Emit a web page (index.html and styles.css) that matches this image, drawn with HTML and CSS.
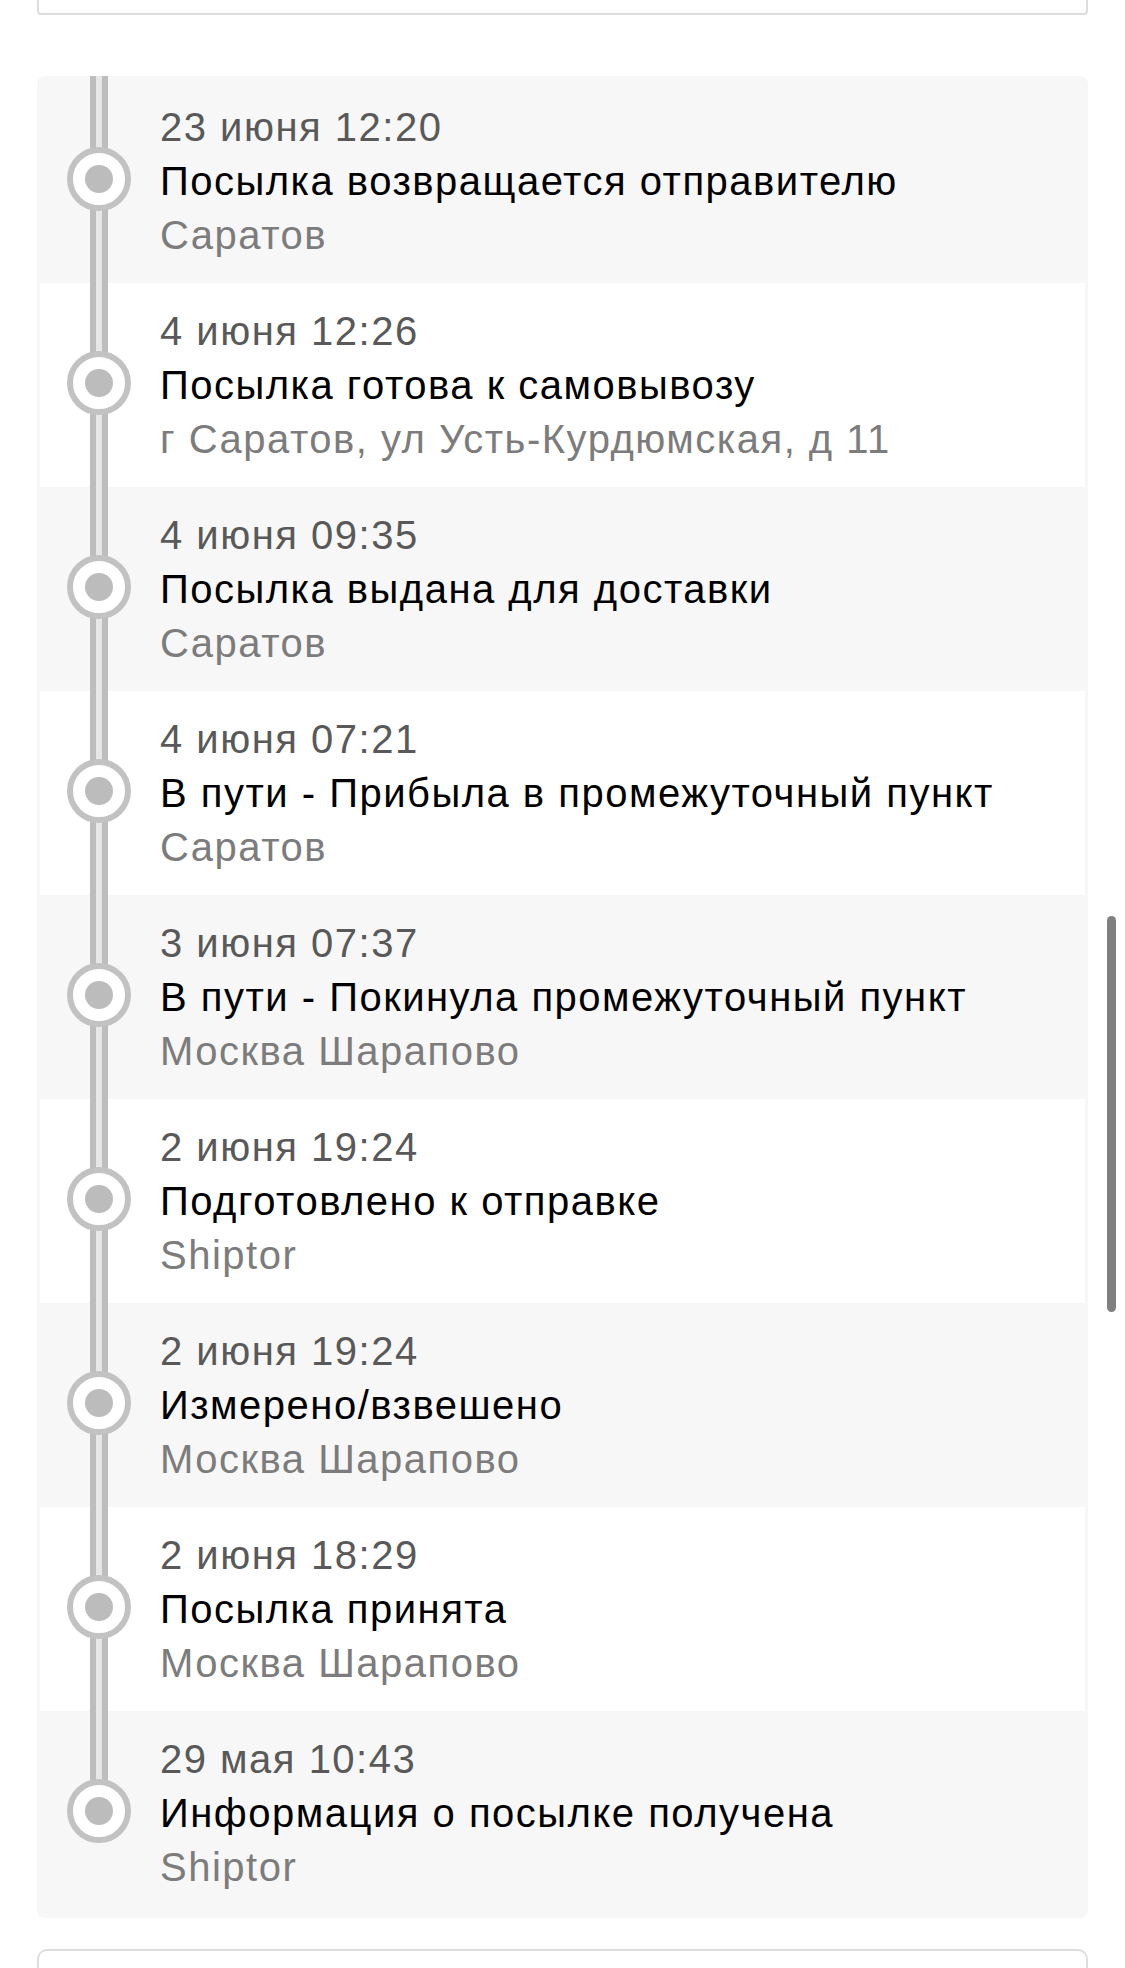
FILE: index.html
```html
<!DOCTYPE html>
<html lang="ru">
<head>
<meta charset="utf-8">
<title>Отслеживание посылки</title>
<link rel="stylesheet" href="styles.css">
</head>
<body>
<div class="card card-top"></div>

<div class="timeline">
  <div class="event">
    <div class="marker"><span class="dot"></span></div>
    <div class="info">
      <div class="date">23 июня 12:20</div>
      <div class="title">Посылка возвращается отправителю</div>
      <div class="place">Саратов</div>
    </div>
  </div>
  <div class="event">
    <div class="marker"><span class="dot"></span></div>
    <div class="info">
      <div class="date">4 июня 12:26</div>
      <div class="title">Посылка готова к самовывозу</div>
      <div class="place">г Саратов, ул Усть-Курдюмская, д 11</div>
    </div>
  </div>
  <div class="event">
    <div class="marker"><span class="dot"></span></div>
    <div class="info">
      <div class="date">4 июня 09:35</div>
      <div class="title">Посылка выдана для доставки</div>
      <div class="place">Саратов</div>
    </div>
  </div>
  <div class="event">
    <div class="marker"><span class="dot"></span></div>
    <div class="info">
      <div class="date">4 июня 07:21</div>
      <div class="title">В пути - Прибыла в промежуточный пункт</div>
      <div class="place">Саратов</div>
    </div>
  </div>
  <div class="event">
    <div class="marker"><span class="dot"></span></div>
    <div class="info">
      <div class="date">3 июня 07:37</div>
      <div class="title">В пути - Покинула промежуточный пункт</div>
      <div class="place">Москва Шарапово</div>
    </div>
  </div>
  <div class="event">
    <div class="marker"><span class="dot"></span></div>
    <div class="info">
      <div class="date">2 июня 19:24</div>
      <div class="title">Подготовлено к отправке</div>
      <div class="place">Shiptor</div>
    </div>
  </div>
  <div class="event">
    <div class="marker"><span class="dot"></span></div>
    <div class="info">
      <div class="date">2 июня 19:24</div>
      <div class="title">Измерено/взвешено</div>
      <div class="place">Москва Шарапово</div>
    </div>
  </div>
  <div class="event">
    <div class="marker"><span class="dot"></span></div>
    <div class="info">
      <div class="date">2 июня 18:29</div>
      <div class="title">Посылка принята</div>
      <div class="place">Москва Шарапово</div>
    </div>
  </div>
  <div class="event">
    <div class="marker"><span class="dot"></span></div>
    <div class="info">
      <div class="date">29 мая 10:43</div>
      <div class="title">Информация о посылке получена</div>
      <div class="place">Shiptor</div>
    </div>
  </div>
</div>

<div class="card card-bottom"></div>

<div class="scrollbar"></div>
</body>
</html>
```

FILE: styles.css
```css
html, body {
  margin: 0;
  padding: 0;
  background: #ffffff;
}

body {
  padding: 0 37px;
  height: 1968px;
  overflow: hidden;
  box-sizing: border-box;
  font-family: "Liberation Sans", Arial, sans-serif;
}

.card {
  box-sizing: border-box;
  border: 2px solid #dddddd;
  background: #ffffff;
}

.card-top {
  height: 15px;
  border-top: none;
  border-radius: 0 0 4px 4px;
}

.card-bottom {
  margin-top: 31px;
  height: 40px;
  border-bottom: none;
  border-radius: 10px 10px 0 0;
}

.timeline {
  margin-top: 61px;
  background: #f7f7f7;
  border-radius: 8px;
  padding: 3px 3px;
  display: flex;
  flex-direction: column;
}

.event {
  display: flex;
  height: 204px;
  box-sizing: border-box;
}

.event:nth-child(even) {
  background: #ffffff;
}

.marker {
  position: relative;
  flex: 0 0 120px;
  display: flex;
  align-items: center;
}

.marker::before {
  content: "";
  position: absolute;
  left: 50px;
  top: 0;
  bottom: 0;
  width: 6px;
  background: #e7e7e7;
  border-left: 6px solid #bdbdbd;
  border-right: 6px solid #bdbdbd;
}

.event:first-child .marker::before {
  top: -3px;
}

.event:last-child .marker::before {
  bottom: 50%;
}

.dot {
  position: relative;
  margin-left: 27px;
  margin-top: -4px;
  width: 64px;
  height: 64px;
  box-sizing: border-box;
  border: 6px solid #c2c2c2;
  border-radius: 50%;
  background: #ffffff;
  display: flex;
  align-items: center;
  justify-content: center;
}

.dot::after {
  content: "";
  width: 28px;
  height: 28px;
  border-radius: 50%;
  background: #bcbcbc;
}

.info {
  padding-top: 21px;
  font-size: 40px;
  line-height: 54px;
  letter-spacing: 1.5px;
  white-space: nowrap;
}

.date {
  color: #595959;
}

.title {
  color: #000000;
}

.place {
  color: #7c7c7c;
}

.scrollbar {
  position: fixed;
  left: 1107px;
  top: 916px;
  width: 9px;
  height: 396px;
  border-radius: 5px;
  background: #808080;
}
```
